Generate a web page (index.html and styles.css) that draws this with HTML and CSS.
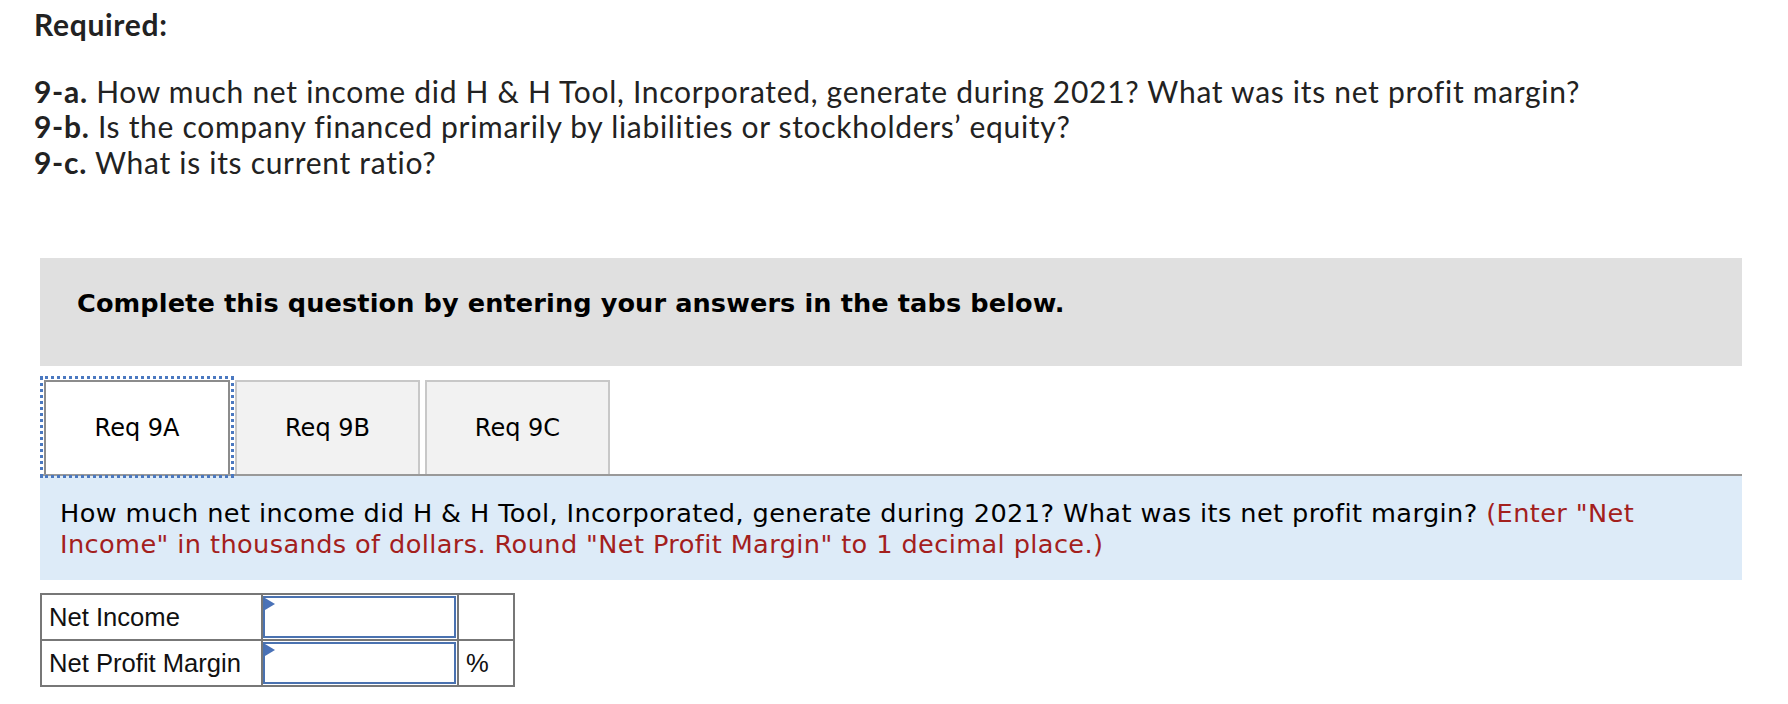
FILE: index.html
```html
<!DOCTYPE html>
<html lang="en">
<head>
<meta charset="utf-8">
<title>Required 9</title>
<link rel="stylesheet" href="styles.css">
</head>
<body>
<div class="page">
  <section class="required">
    <p class="req-title">Required:</p>
    <p class="req-line"><b>9-a.</b> How much net income did H &amp; H Tool, Incorporated, generate during 2021? What was its net profit margin?</p>
    <p class="req-line"><b>9-b.</b> Is the company financed primarily by liabilities or stockholders’ equity?</p>
    <p class="req-line"><b>9-c.</b> What is its current ratio?</p>
  </section>

  <div class="instructions">Complete this question by entering your answers in the tabs below.</div>

  <div class="tabs">
    <div class="tab active">Req 9A</div>
    <div class="tab">Req 9B</div>
    <div class="tab">Req 9C</div>
  </div>

  <div class="question"><span class="prompt">How much net income did H &amp; H Tool, Incorporated, generate during 2021? What was its net profit margin?</span> <span class="hint">(Enter "Net Income" in thousands of dollars. Round "Net Profit Margin" to 1 decimal place.)</span></div>

  <table class="answers">
    <tr>
      <td class="label">Net Income</td>
      <td class="field"><div class="input-wrap"><span class="flag"></span><input type="text" class="entry"></div></td>
      <td class="unit"></td>
    </tr>
    <tr>
      <td class="label">Net Profit Margin</td>
      <td class="field"><div class="input-wrap"><span class="flag"></span><input type="text" class="entry"></div></td>
      <td class="unit">%</td>
    </tr>
  </table>
</div>
</body>
</html>
```
FILE: styles.css
```css
html, body {
  margin: 0;
  padding: 0;
  background: #ffffff;
}

.page {
  padding: 7px 46px 0 34px;
}

.required {
  font-family: Lato, "Open Sans", sans-serif;
  font-size: 30px;
  line-height: 35.5px;
  color: #222222;
  letter-spacing: 0.7px;
}

.required p {
  margin: 0;
}

.req-title {
  font-weight: 700;
  margin-bottom: 31px !important;
}

.req-line b {
  font-weight: 700;
}

.instructions {
  margin: 78px 0 0 6px;
  background: #e0e0e0;
  padding: 28px 37px 46px;
  font-family: "DejaVu Sans", Verdana, sans-serif;
  font-weight: 700;
  font-size: 25.6px;
  line-height: 34px;
  letter-spacing: 0.1px;
  color: #000000;
}

.tabs {
  display: flex;
  gap: 5px;
  margin: 14px 0 0 6px;
  padding-left: 4px;
}

.tab {
  box-sizing: border-box;
  width: 185px;
  height: 94px;
  background: #f2f2f2;
  border: 2px solid #c8c8c8;
  border-bottom: none;
  display: flex;
  align-items: center;
  justify-content: center;
  font-family: "DejaVu Sans", Verdana, sans-serif;
  font-size: 24px;
  color: #000000;
}

.tab.active {
  width: 186px;
  background: #ffffff;
  border-color: #8c8c8c;
  outline: 3px dotted #4a78c0;
  outline-offset: 1px;
}

.question {
  margin-left: 6px;
  border-top: 2px solid #999999;
  background: #ddebf8;
  padding: 22px 60px 20px 20px;
  font-family: "DejaVu Sans", Verdana, sans-serif;
  font-size: 25.6px;
  line-height: 31px;
  letter-spacing: 0.4px;
  color: #000000;
}

.hint {
  color: #a3201d;
}

.answers {
  margin: 13px 0 0 6px;
  border-collapse: collapse;
  font-family: "Liberation Sans", Arial, sans-serif;
  font-size: 25.6px;
  color: #111111;
}

.answers td {
  border: 2px solid #777777;
  height: 44px;
  padding: 0;
}

.label {
  width: 212px;
  padding: 0 0 0 7px !important;
}

.field {
  width: 194px;
}

.unit {
  width: 47px;
  padding: 0 0 0 7px !important;
}

.input-wrap {
  position: relative;
  margin: 1px 1px 1px 0;
}

.entry {
  display: block;
  box-sizing: border-box;
  width: 100%;
  height: 42px;
  margin: 0;
  border: 2px solid #4a72b0;
  background: #ffffff;
  outline: none;
}

.flag {
  position: absolute;
  left: 2px;
  top: 2px;
  width: 0;
  height: 0;
  border-top: 6px solid transparent;
  border-bottom: 6px solid transparent;
  border-left: 10px solid #4a72b8;
}
```
